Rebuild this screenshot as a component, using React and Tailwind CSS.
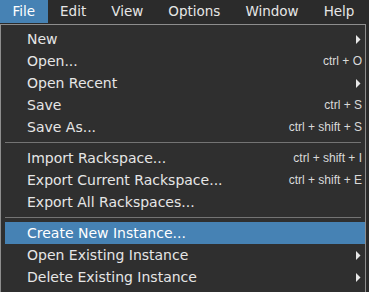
const MENUS = ['File', 'Edit', 'View', 'Options', 'Window', 'Help']

const ITEMS = [
  { label: 'New', sub: true },
  { label: 'Open...', keys: 'ctrl + O' },
  { label: 'Open Recent', sub: true },
  { label: 'Save', keys: 'ctrl + S' },
  { label: 'Save As...', keys: 'ctrl + shift + S' },
  { sep: true },
  { label: 'Import Rackspace...', keys: 'ctrl + shift + I' },
  { label: 'Export Current Rackspace...', keys: 'ctrl + shift + E' },
  { label: 'Export All Rackspaces...' },
  { sep: true },
  { label: 'Create New Instance...', active: true },
  { label: 'Open Existing Instance', sub: true },
  { label: 'Delete Existing Instance', sub: true },
]

function Arrow() {
  return (
    <svg width="5" height="9" viewBox="0 0 5 9" className="fill-[#e8e8e8] mr-[1px]">
      <path d="M0 0 L4.5 4.5 L0 9 Z" />
    </svg>
  )
}

export default function App() {
  return (
    <div className="w-[369px] h-[292px] overflow-hidden bg-[#2b2b2b] text-[#e6e6e6] font-['DejaVu_Sans',sans-serif]">
      <div className="flex h-[24px] bg-[#2b2b2b] text-[13.5px]">
        {MENUS.map((m) => (
          <div
            key={m}
            className={`h-[23px] flex items-center px-[12.5px] ${m === 'File' ? 'bg-[#4682b4] text-white' : ''}`}
          >
            {m}
          </div>
        ))}
      </div>
      <div className="w-[366px] h-[268px] border border-b-0 border-[#8e8e8e] bg-[#2f2f2f] pt-[3px] pl-[4px]">
        {ITEMS.map((it, i) =>
          it.sep ? (
            <div key={i} className="h-[9px] flex items-center pr-[4px]">
              <div className="h-px w-full bg-[#747474]" />
            </div>
          ) : (
            <div
              key={i}
              className={`h-[22px] flex items-center pl-[22px] pr-[3px] ${it.active ? 'bg-[#4682b4] text-white' : ''}`}
            >
              <span className="flex-1 text-[14px] leading-none">{it.label}</span>
              {it.keys && (
                <span className="font-['Liberation_Sans',sans-serif] text-[12px] text-[#dadada] leading-none">
                  {it.keys}
                </span>
              )}
              {it.sub && <Arrow />}
            </div>
          )
        )}
      </div>
    </div>
  )
}
